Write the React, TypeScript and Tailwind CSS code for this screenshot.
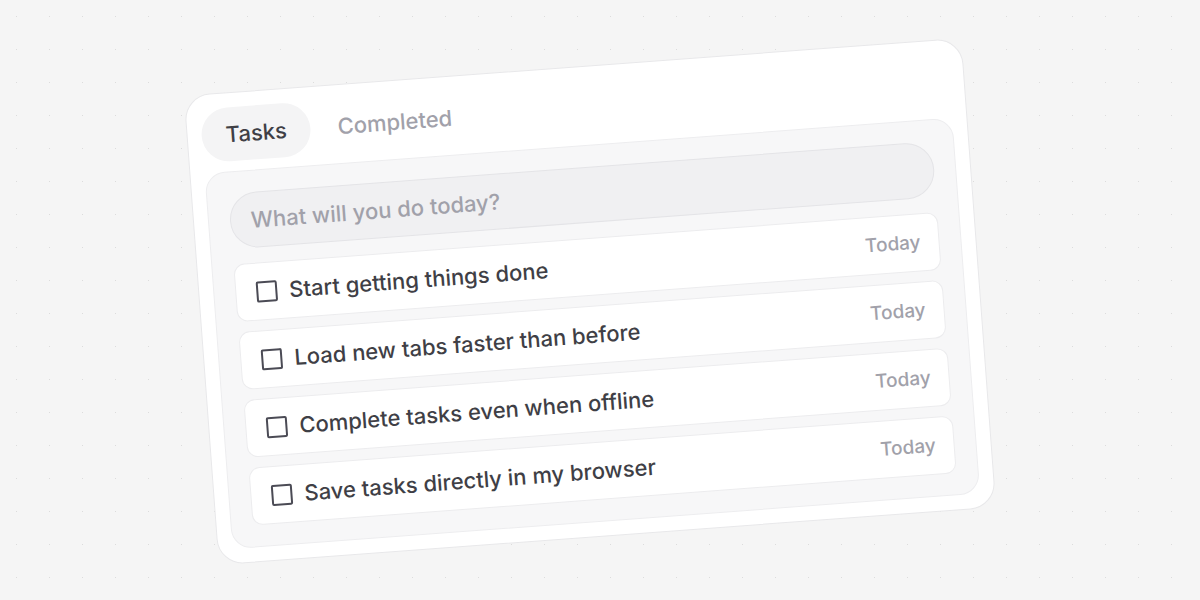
const tasks = [
  "Start getting things done",
  "Load new tabs faster than before",
  "Complete tasks even when offline",
  "Save tasks directly in my browser",
];

function TaskRow({ label }: { label: string }) {
  return (
    <div className="flex h-[58px] items-center justify-between rounded-[11px] border border-[#ececee] bg-white pl-5 pr-[18px]">
      <div className="flex items-center gap-3">
        <span className="h-[21px] w-[21px] rounded-[2px] border-2 border-[#4b4b55]" />
        <span className="text-[22px] font-medium text-[#3f3f46]">{label}</span>
      </div>
      <span className="text-[19px] font-medium text-[#a1a1aa]">Today</span>
    </div>
  );
}

export default function App() {
  return (
    <div className="flex h-[600px] w-[1200px] items-center justify-center overflow-hidden bg-[#f5f5f5] bg-[radial-gradient(#dcdcdc_0.8px,transparent_1px)] bg-[size:33px_33px] font-['Inter',sans-serif]">
      <div className="-translate-x-[10px] translate-y-[1px] -rotate-[4.25deg] rounded-[26px] border border-[#e8e8ea] bg-white p-[14px]">
        <div className="w-[750px]">
          <div className="flex items-center gap-[3px]">
            <button className="h-[54px] rounded-full bg-[#f4f4f5] px-6 text-[22px] font-medium text-[#3f3f46]">
              Tasks
            </button>
            <button className="h-[54px] rounded-full px-6 text-[22px] font-medium text-[#a1a1aa]">
              Completed
            </button>
          </div>
          <div className="mt-[10px] flex flex-col rounded-[20px] border border-[#ededef] bg-[#f7f7f8] p-[21px]">
            <div className="flex h-[56px] items-center rounded-full border border-[#e4e4e7] bg-[#f0f0f2] px-5 text-[22px] font-medium text-[#a1a1aa]">
              What will you do today?
            </div>
            <div className="mt-[15px] flex flex-col gap-[10px]">
              {tasks.map((t) => (
                <TaskRow key={t} label={t} />
              ))}
            </div>
          </div>
        </div>
      </div>
    </div>
  );
}
